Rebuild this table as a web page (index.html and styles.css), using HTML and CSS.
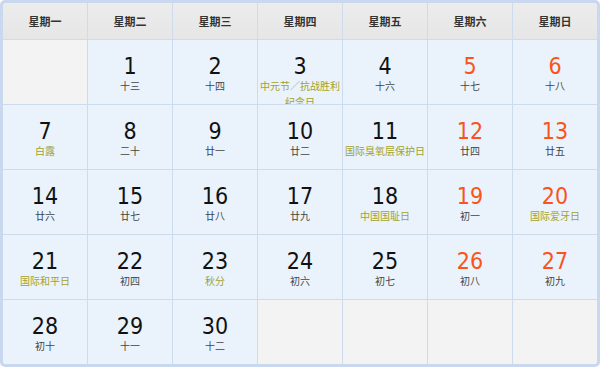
FILE: index.html
```html
<!DOCTYPE html>
<html lang="zh-CN">
<head>
<meta charset="utf-8">
<title>2025年9月 日历</title>
<link rel="stylesheet" href="styles.css">
</head>
<body>
<div class="calendar">
  <div class="head">星期一</div>
  <div class="head">星期二</div>
  <div class="head">星期三</div>
  <div class="head">星期四</div>
  <div class="head">星期五</div>
  <div class="head">星期六</div>
  <div class="head">星期日</div>

  <div class="day empty"></div>
  <div class="day"><span class="num">1</span><span class="sub">十三</span></div>
  <div class="day"><span class="num">2</span><span class="sub">十四</span></div>
  <div class="day"><span class="num">3</span><span class="sub fest">中元节／抗战胜利纪念日</span></div>
  <div class="day"><span class="num">4</span><span class="sub">十六</span></div>
  <div class="day weekend"><span class="num">5</span><span class="sub">十七</span></div>
  <div class="day weekend"><span class="num">6</span><span class="sub">十八</span></div>

  <div class="day"><span class="num">7</span><span class="sub fest">白露</span></div>
  <div class="day"><span class="num">8</span><span class="sub">二十</span></div>
  <div class="day"><span class="num">9</span><span class="sub">廿一</span></div>
  <div class="day"><span class="num">10</span><span class="sub">廿二</span></div>
  <div class="day"><span class="num">11</span><span class="sub fest">国际臭氧层保护日</span></div>
  <div class="day weekend"><span class="num">12</span><span class="sub">廿四</span></div>
  <div class="day weekend"><span class="num">13</span><span class="sub">廿五</span></div>

  <div class="day"><span class="num">14</span><span class="sub">廿六</span></div>
  <div class="day"><span class="num">15</span><span class="sub">廿七</span></div>
  <div class="day"><span class="num">16</span><span class="sub">廿八</span></div>
  <div class="day"><span class="num">17</span><span class="sub">廿九</span></div>
  <div class="day"><span class="num">18</span><span class="sub fest">中国国耻日</span></div>
  <div class="day weekend"><span class="num">19</span><span class="sub">初一</span></div>
  <div class="day weekend"><span class="num">20</span><span class="sub fest">国际爱牙日</span></div>

  <div class="day"><span class="num">21</span><span class="sub fest">国际和平日</span></div>
  <div class="day"><span class="num">22</span><span class="sub">初四</span></div>
  <div class="day"><span class="num">23</span><span class="sub fest">秋分</span></div>
  <div class="day"><span class="num">24</span><span class="sub">初六</span></div>
  <div class="day"><span class="num">25</span><span class="sub">初七</span></div>
  <div class="day weekend"><span class="num">26</span><span class="sub">初八</span></div>
  <div class="day weekend"><span class="num">27</span><span class="sub">初九</span></div>

  <div class="day"><span class="num">28</span><span class="sub">初十</span></div>
  <div class="day"><span class="num">29</span><span class="sub">十一</span></div>
  <div class="day"><span class="num">30</span><span class="sub">十二</span></div>
  <div class="day empty"></div>
  <div class="day empty"></div>
  <div class="day empty"></div>
  <div class="day empty"></div>
</div>
</body>
</html>
```

FILE: styles.css
```css
html, body {
  margin: 0;
  padding: 0;
  background: #ffffff;
}

.calendar {
  width: 600px;
  height: 367px;
  box-sizing: border-box;
  border: 3px solid #c9d8ee;
  border-radius: 5px;
  background: #cddbee;
  display: grid;
  grid-template-columns: repeat(7, 84px);
  grid-template-rows: 36px repeat(5, 64px);
  column-gap: 1px;
  row-gap: 1px;
  overflow: hidden;
  font-family: "Noto Sans CJK SC", "DejaVu Sans", sans-serif;
}

.head {
  background: linear-gradient(#ececec, #e6e6e6);
  display: flex;
  align-items: center;
  justify-content: center;
  font-size: 11px;
  font-weight: bold;
  color: #333333;
}

.day {
  background: #eaf3fb;
  display: flex;
  flex-direction: column;
  align-items: center;
  padding-top: 14px;
  box-sizing: border-box;
  overflow: hidden;
  text-align: center;
}

.day.empty {
  background: #f3f3f3;
}

.num {
  font-family: "DejaVu Sans Condensed", "DejaVu Sans", sans-serif;
  font-stretch: semi-condensed;
  font-size: 23px;
  line-height: 24px;
  color: #111111;
}

.weekend .num {
  color: #f8541c;
}

.sub {
  font-size: 10px;
  line-height: 16px;
  color: #444444;
  width: 84px;
}

.sub.fest {
  color: #a3a22a;
}
```
